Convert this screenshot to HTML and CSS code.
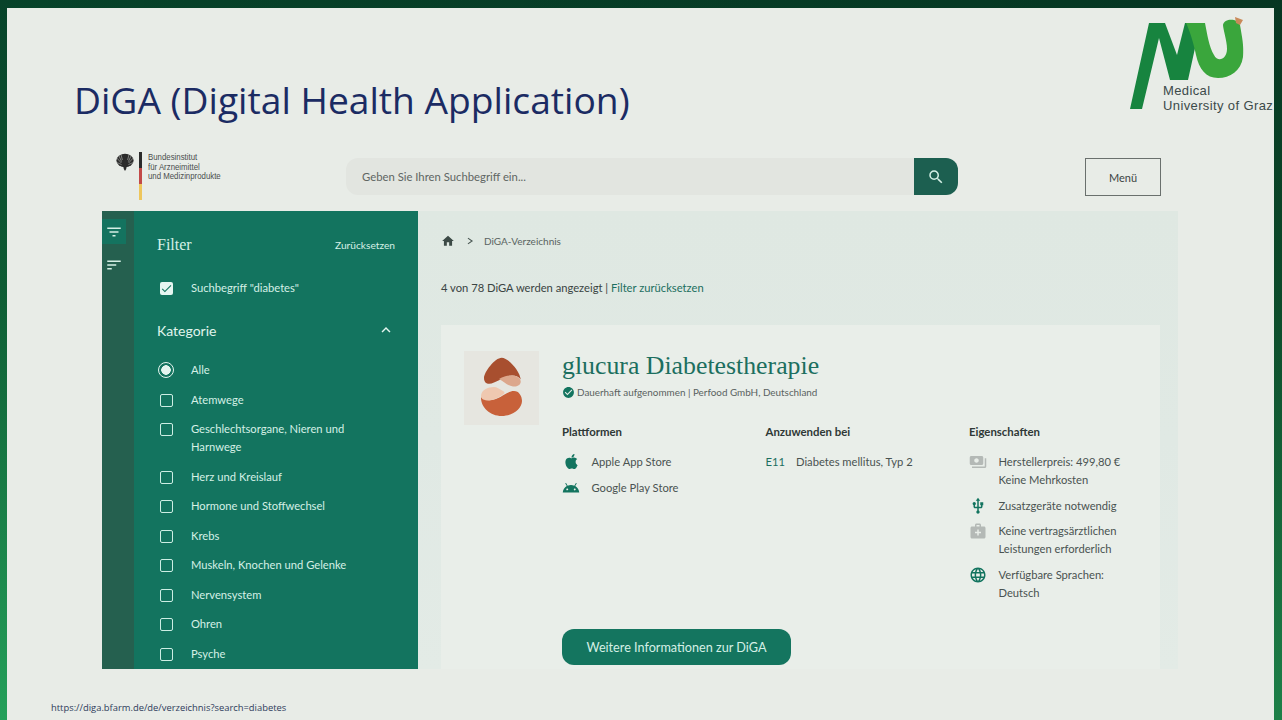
FILE: index.html
```html
<!DOCTYPE html>
<html lang="de">

<head>
  <meta charset="UTF-8" />
  <title>DiGA (Digital Health Application)</title>
  <link rel="stylesheet" href="styles.css">
</head>

<body>
  <div class="slide">

    <!-- Titel und Logo der Folie -->
    <header class="slide-head">
      <h1 class="slide-title">DiGA (Digital Health Application)</h1>
      <div class="mug-logo">
        <svg class="mug-mark" viewBox="0 0 114 93" width="114" height="93">
          <path fill="#17843f" d="M0 92 L19 6 H35 L47 38 L55 6 H63 L67 22 L58 63 H40 L29 21 L12 92 Z" />
          <path fill="#3aa63c" d="M56 6 H75 C77 16 79 30 84 38 C88 46 97 42 97 32 C97 24 93 12 93 8 C94 1 108 1 110 8 C112 20 114 28 113 40 C111 54 100 61 88 61 C76 61 69 52 66 38 C64 28 60 14 56 6 Z" />
          <path fill="#c98a5a" d="M105 0 L113 3 L110 8 L106 6 Z" />
        </svg>
        <div class="mug-text">Medical<br>University of Graz</div>
      </div>
    </header>

    <!-- Kopfzeile der Webseite -->
    <div class="site-bar">
      <div class="bfarm">
        <svg class="eagle" viewBox="0 0 18 18" width="18" height="18">
          <ellipse cx="9" cy="7.5" rx="8.6" ry="6.8" fill="#2c2c2c" />
          <path fill="#2c2c2c" d="M8 3.2 C8 1 10.4 .8 10.6 2.4 L10.3 5 L11 12 L10.2 16 L9 18 L7.8 16 L7 12 L7.7 5 Z" />
          <path stroke="#e8ece7" stroke-width=".45" fill="none" d="M4.8 1 L6.4 7 M2.5 2 L5.6 8.6 M.8 5 L5.4 10 M.8 9.5 L5.6 11.6 M13.2 1 L11.6 7 M15.5 2 L12.4 8.6 M17.2 5 L12.6 10 M17.2 9.5 L12.4 11.6" />
        </svg>
        <div class="flag-bar"></div>
        <div class="bfarm-name">Bundesinstitut<br>für Arzneimittel<br>und Medizinprodukte</div>
      </div>
      <div class="search">
        <div class="search-input">Geben Sie Ihren Suchbegriff ein...</div>
        <div class="search-btn">
          <svg viewBox="0 0 24 24" width="18" height="18"><path fill="#d5f0e6" d="M15.5 14h-.79l-.28-.27A6.471 6.471 0 0 0 16 9.5 6.5 6.5 0 1 0 9.5 16c1.61 0 3.09-.59 4.23-1.57l.27.28v.79l5 4.99L20.49 19l-4.99-5zm-6 0C7.01 14 5 11.99 5 9.5S7.01 5 9.5 5 14 7.01 14 9.5 11.99 14 9.5 14z" /></svg>
        </div>
      </div>
      <div class="menu-btn">Menü</div>
    </div>

    <div class="app">
      <div class="rail">
        <div class="rail-item active">
          <svg viewBox="0 0 24 24" width="18" height="18"><path fill="#d5f0e6" d="M10 18h4v-2h-4v2zM3 6v2h18V6H3zm3 7h12v-2H6v2z" /></svg>
        </div>
        <div class="rail-item">
          <svg viewBox="0 0 24 24" width="18" height="18"><path fill="#d5f0e6" d="M3 18h6v-2H3v2zM3 6v2h18V6H3zm0 7h12v-2H3v2z" /></svg>
        </div>
      </div>

      <aside class="filter">
        <div class="filter-head">
          <span class="filter-title">Filter</span>
          <span class="filter-reset">Zurücksetzen</span>
        </div>
        <div class="opt opt-search"><span class="box checked">
            <svg viewBox="0 0 24 24" width="13" height="13"><path fill="#13745f" d="M9 16.2 4.8 12l-1.4 1.4L9 19 21 7l-1.4-1.4z" /></svg>
          </span><span>Suchbegriff "diabetes"</span></div>

        <div class="cat-head">
          <span>Kategorie</span>
          <svg viewBox="0 0 24 24" width="18" height="18"><path fill="#e4f5ef" d="M7.41 15.41L12 10.83l4.59 4.58L18 14l-6-6-6 6z" /></svg>
        </div>

        <div class="opt-list">
          <div class="opt"><span class="radio"></span><span>Alle</span></div>
          <div class="opt"><span class="box"></span><span>Atemwege</span></div>
          <div class="opt"><span class="box"></span><span>Geschlechtsorgane, Nieren und Harnwege</span></div>
          <div class="opt"><span class="box"></span><span>Herz und Kreislauf</span></div>
          <div class="opt"><span class="box"></span><span>Hormone und Stoffwechsel</span></div>
          <div class="opt"><span class="box"></span><span>Krebs</span></div>
          <div class="opt"><span class="box"></span><span>Muskeln, Knochen und Gelenke</span></div>
          <div class="opt"><span class="box"></span><span>Nervensystem</span></div>
          <div class="opt"><span class="box"></span><span>Ohren</span></div>
          <div class="opt"><span class="box"></span><span>Psyche</span></div>
        </div>
      </aside>

      <main class="content">
        <div class="crumbs">
          <svg viewBox="0 0 24 24" width="14" height="14"><path fill="#3c4a46" d="M10 20v-6h4v6h5v-8h3L12 3 2 12h3v8z" /></svg>
          <svg class="crumb-sep" viewBox="0 0 24 24" width="10" height="10"><path fill="none" stroke="#4a5753" stroke-width="2.6" d="M7 5l10 7-10 7" /></svg>
          <span>DiGA-Verzeichnis</span>
        </div>
        <div class="count">4 von 78 DiGA werden angezeigt | <span class="count-link">Filter zurücksetzen</span></div>

        <section class="card">
          <div class="card-top">
            <div class="app-icon">
              <svg viewBox="0 0 75 72" width="75" height="72">
                <path fill="#a84f2f" d="M37.7 6.7 C31 6.7 20 21 20 27 C20 33 25 34 30 31.5 C36 29 42 24.5 48 24.5 C52 24.5 55 26 56.7 28.5 C56 20 44 6.7 37.7 6.7z" />
                <path fill="#dca78c" d="M35 28 C40 25 44 24 49 24.5 C54 25 57 28 56.7 31 C56.5 34 53 36 49 35.5 C43 34.5 39 30 35 28z" />
                <path fill="#c8613a" d="M17 46 C22 50 27 50 33 47.5 C39 45 44 40 50 40 C55 40 58 45 58 50 C58 58 48 65 37.7 65 C26 65 16.5 56 17 46z" />
                <path fill="#efc8b0" d="M17 45 C17 39 24 36 30 36 C33 36 35 38 39 40 C41 41 41 42 39 43.5 C34 47 29 49.5 25 49.5 C20 49.5 17 48 17 45z" />
              </svg>
            </div>
            <div class="card-titles">
              <h2 class="app-name">glucura Diabetestherapie</h2>
              <div class="app-status">
                <svg viewBox="0 0 24 24" width="13" height="13"><path fill="#13745f" d="M12 2C6.48 2 2 6.48 2 12s4.48 10 10 10 10-4.48 10-10S17.52 2 12 2zm-2 15l-5-5 1.41-1.41L10 14.17l7.59-7.59L19 8l-9 9z" /></svg>
                <span>Dauerhaft aufgenommen | Perfood GmbH, Deutschland</span>
              </div>
            </div>
          </div>

          <div class="card-cols">
            <div class="col">
              <h3 class="col-title">Plattformen</h3>
              <div class="row">
                <svg class="ico ico-apple" viewBox="0 0 24 24" width="15" height="15"><path fill="#13745f" d="M12.152 6.896c-.948 0-2.415-1.078-3.96-1.04-2.04.027-3.91 1.183-4.961 3.014-2.117 3.675-.546 9.103 1.519 12.09 1.013 1.454 2.208 3.09 3.792 3.039 1.52-.065 2.09-.987 3.935-.987 1.831 0 2.35.987 3.96.948 1.637-.026 2.676-1.48 3.676-2.948 1.156-1.688 1.636-3.325 1.662-3.415-.039-.013-3.182-1.221-3.22-4.857-.026-3.04 2.48-4.494 2.597-4.559-1.429-2.09-3.623-2.324-4.39-2.376-2-.156-3.675 1.09-4.61 1.09zM15.53 3.83c.843-1.012 1.4-2.427 1.245-3.83-1.207.052-2.662.805-3.532 1.818-.78.896-1.454 2.338-1.273 3.714 1.338.104 2.715-.688 3.559-1.701" /></svg>
                <span>Apple App Store</span>
              </div>
              <div class="row">
                <svg class="ico" viewBox="0 0 24 24" width="18" height="18"><path fill="#13745f" d="M17.6 9.48l1.84-3.18c.16-.31.04-.69-.26-.85-.29-.15-.65-.06-.83.22l-1.88 3.24c-2.86-1.21-6.08-1.21-8.94 0L5.65 5.67c-.19-.29-.58-.38-.87-.2-.28.18-.37.54-.22.83L6.4 9.48C3.3 11.25 1.28 14.44 1 18h22c-.28-3.56-2.3-6.75-5.4-8.52zM7 15.25c-.69 0-1.25-.56-1.25-1.25s.56-1.25 1.25-1.25 1.25.56 1.25 1.25-.56 1.25-1.25 1.25zm10 0c-.69 0-1.25-.56-1.25-1.25s.56-1.25 1.25-1.25 1.25.56 1.25 1.25-.56 1.25-1.25 1.25z" /></svg>
                <span>Google Play Store</span>
              </div>
            </div>

            <div class="col">
              <h3 class="col-title">Anzuwenden bei</h3>
              <div class="row"><span class="icd">E11</span><span>Diabetes mellitus, Typ 2</span></div>
            </div>

            <div class="col">
              <h3 class="col-title">Eigenschaften</h3>
              <div class="row">
                <svg class="ico" viewBox="0 0 24 24" width="18" height="18"><path fill="#b4b9b6" d="M19 14V6c0-1.1-.9-2-2-2H3c-1.1 0-2 .9-2 2v8c0 1.1.9 2 2 2h14c1.1 0 2-.9 2-2zm-9-1c-1.66 0-3-1.34-3-3s1.34-3 3-3 3 1.34 3 3-1.34 3-3 3zm13-6v11c0 1.1-.9 2-2 2H4v-2h17V7h2z" /></svg>
                <span>Herstellerpreis: 499,80 €<br>Keine Mehrkosten</span>
              </div>
              <div class="row">
                <svg class="ico" viewBox="0 0 24 24" width="18" height="18"><path fill="#13745f" d="M15 7v4h1v2h-3V5h2l-3-4-3 4h2v8H8v-2.07c.7-.37 1.2-1.08 1.2-1.93 0-1.21-.99-2.2-2.2-2.2-1.21 0-2.2.99-2.2 2.2 0 .85.5 1.56 1.2 1.93V13c0 1.11.89 2 2 2h3v3.05c-.71.37-1.2 1.1-1.2 1.95 0 1.22.99 2.2 2.2 2.2 1.21 0 2.2-.98 2.2-2.2 0-.85-.49-1.58-1.2-1.95V15h3c1.11 0 2-.89 2-2v-2h1V7h-4z" /></svg>
                <span>Zusatzgeräte notwendig</span>
              </div>
              <div class="row">
                <svg class="ico" viewBox="0 0 24 24" width="18" height="18"><path fill="#b4b9b6" d="M20 6h-4V4c0-1.1-.9-2-2-2h-4c-1.1 0-2 .9-2 2v2H4c-1.1 0-2 .9-2 2v12c0 1.1.9 2 2 2h16c1.1 0 2-.9 2-2V8c0-1.1-.9-2-2-2zM10 4h4v2h-4V4zm6 11h-3v3h-2v-3H8v-2h3v-3h2v3h3v2z" /></svg>
                <span>Keine vertragsärztlichen<br>Leistungen erforderlich</span>
              </div>
              <div class="row">
                <svg class="ico" viewBox="0 0 24 24" width="18" height="18"><path fill="#13745f" d="M11.99 2C6.47 2 2 6.48 2 12s4.47 10 9.99 10C17.52 22 22 17.52 22 12S17.52 2 11.99 2zm6.93 6h-2.95c-.32-1.25-.78-2.45-1.38-3.56 1.84.63 3.37 1.91 4.33 3.56zM12 4.04c.83 1.2 1.48 2.53 1.91 3.96h-3.82c.43-1.43 1.08-2.76 1.91-3.96zM4.26 14C4.1 13.36 4 12.69 4 12s.1-1.36.26-2h3.38c-.08.66-.14 1.32-.14 2 0 .68.06 1.34.14 2H4.26zm.82 2h2.95c.32 1.25.78 2.45 1.38 3.56-1.84-.63-3.37-1.9-4.33-3.56zm2.95-8H5.08c.96-1.66 2.49-2.93 4.33-3.56C8.81 5.55 8.35 6.75 8.03 8zM12 19.96c-.83-1.2-1.48-2.53-1.91-3.96h3.82c-.43 1.43-1.08 2.76-1.91 3.96zM14.34 14H9.66c-.09-.66-.16-1.32-.16-2 0-.68.07-1.35.16-2h4.68c.09.65.16 1.32.16 2 0 .68-.07 1.34-.16 2zm.25 5.56c.6-1.11 1.06-2.31 1.38-3.56h2.95c-.96 1.65-2.49 2.93-4.33 3.56zM16.36 14c.08-.66.14-1.32.14-2 0-.68-.06-1.34-.14-2h3.38c.16.64.26 1.31.26 2s-.1 1.36-.26 2h-3.38z" /></svg>
                <span>Verfügbare Sprachen:<br>Deutsch</span>
              </div>
            </div>
          </div>

          <div class="more-btn">Weitere Informationen zur DiGA</div>
        </section>
      </main>
    </div>

    <div class="source-url">https://diga.bfarm.de/de/verzeichnis?search=diabetes</div>
  </div>
</body>

</html>
```

FILE: styles.css
```css
* {
  box-sizing: border-box;
}

html,
body {
  height: 100%;
}

body {
  margin: 0;
  overflow: hidden;
  font-family: Lato, sans-serif;
  background:
    linear-gradient(to right, rgba(0, 0, 0, 0), rgba(0, 0, 0, 0.2)),
    linear-gradient(to bottom, #07432a 0%, #0e5c34 40%, #24a05a 100%);
}

.slide {
  margin: 8px 8px 0 7px;
  height: 712px;
  overflow: hidden;
  background: #e8ece7;
}

/* Folienkopf */
.slide-head {
  height: 142px;
  display: flex;
  justify-content: space-between;
  align-items: flex-start;
  padding-left: 67px;
}

.slide-title {
  margin: 69px 0 0;
  font-family: "Open Sans", sans-serif;
  font-size: 37.2px;
  font-weight: 400;
  line-height: 46px;
  color: #1b2b63;
}

.mug-logo {
  width: 144px;
  margin-top: 9px;
  display: grid;
  flex: none;
}

.mug-mark,
.mug-text {
  grid-area: 1 / 1;
}

.mug-text {
  margin: 66px 0 0 33px;
  font-family: "Liberation Sans", sans-serif;
  font-size: 13px;
  line-height: 15px;
  letter-spacing: 0.38px;
  white-space: nowrap;
  color: #3c4a4a;
}

/* Kopfzeile der Webseite */
.site-bar {
  height: 61px;
  display: flex;
  align-items: flex-start;
  padding-left: 109px;
}

.bfarm {
  width: 230px;
  display: flex;
  align-items: flex-start;
  flex: none;
}

.eagle {
  margin-top: 3px;
}

.flag-bar {
  width: 3px;
  height: 48px;
  margin: 2px 6px 0 5px;
  background: linear-gradient(to bottom, #2b2b2b 0 33%, #c24a48 33% 66%, #eec65c 66% 100%);
}

.bfarm-name {
  margin-top: 3px;
  font-family: "Liberation Sans", sans-serif;
  font-size: 9px;
  line-height: 9.5px;
  white-space: nowrap;
  color: #4a4f4e;
  transform: scaleX(0.87);
  transform-origin: left top;
}

.search {
  width: 612px;
  height: 37px;
  margin-top: 8px;
  display: flex;
  flex: none;
}

.search-input {
  flex: 1;
  padding-left: 16px;
  display: flex;
  align-items: center;
  border-radius: 12px 0 0 12px;
  font-size: 11.3px;
  color: #5f6663;
  background: #e2e5e0;
}

.search-btn {
  width: 44px;
  display: flex;
  align-items: center;
  justify-content: center;
  border-radius: 0 12px 12px 0;
  background: #1c5f50;
}

.menu-btn {
  width: 76px;
  height: 38px;
  margin: 8px 0 0 127px;
  display: flex;
  align-items: center;
  justify-content: center;
  border: 1px solid #6a706d;
  font-size: 11px;
  color: #3c4443;
}

/* Anwendung */
.app {
  width: 1076px;
  height: 458px;
  margin-left: 95px;
  display: flex;
  overflow: hidden;
}

.rail {
  width: 32px;
  padding-top: 8px;
  flex: none;
  background: #25604f;
}

.rail-item {
  width: 24px;
  height: 25px;
  margin-bottom: 8px;
  display: flex;
  align-items: center;
  justify-content: center;
}

.rail-item.active {
  background: #14735f;
}

.filter {
  width: 284px;
  padding: 0 23px;
  flex: none;
  font-size: 11.2px;
  color: #d5f0e6;
  background: #13745f;
}

.filter-head {
  height: 68px;
  display: flex;
  align-items: center;
  justify-content: space-between;
}

.filter-title {
  font-family: "Liberation Serif", serif;
  font-size: 16px;
}

.filter-reset {
  font-size: 10.2px;
}

.opt {
  display: flex;
  align-items: flex-start;
  gap: 18px;
  line-height: 18px;
}

.opt-search {
  height: 18px;
}

.cat-head {
  height: 36px;
  margin-top: 15px;
  display: flex;
  align-items: center;
  justify-content: space-between;
  font-size: 14px;
  color: #e0f4ed;
}

.opt-list {
  margin-top: 13px;
  display: flex;
  flex-direction: column;
  gap: 11.5px;
}

.box {
  width: 13px;
  height: 13px;
  margin: 3px 0 0 3px;
  display: flex;
  align-items: center;
  justify-content: center;
  flex: none;
  border: 1.5px solid #cdeee4;
  border-radius: 2px;
}

.box.checked {
  border: 0;
  background: #e6f6f1;
}

.radio {
  width: 16px;
  height: 16px;
  margin: 1px -1px 0 1px;
  flex: none;
  border: 1.5px solid #e4f5ef;
  border-radius: 50%;
  background: radial-gradient(circle, #e4f5ef 0 4.5px, transparent 5px);
}

.content {
  flex: 1;
  padding: 0 18px 0 23px;
  background: linear-gradient(to bottom, #dfe8e2, #e0e9e4 50%, #e3ebe6);
  font-size: 11.2px;
  color: #3a4442;
}

.crumbs {
  height: 60px;
  padding-bottom: 1px;
  display: flex;
  align-items: center;
  font-size: 10px;
  color: #5a6461;
}

.crumb-sep {
  margin: 0 9px 0 10px;
}

.count {
  height: 54px;
  padding-top: 8px;
  line-height: 18px;
  color: #3a4442;
}

.count-link {
  color: #1c6f5f;
}

.card {
  height: 344px;
  padding: 26px 23px 0;
  background: #e9eee9;
}

.card-top {
  height: 72px;
  display: flex;
  align-items: flex-start;
  gap: 23px;
}

.app-icon {
  width: 75px;
  height: 74px;
  flex: none;
  background: #e6e6e0;
}

.app-name {
  margin: 0;
  font-family: "Liberation Serif", serif;
  font-size: 25.8px;
  font-weight: 400;
  line-height: 30px;
  color: #1c6f5f;
}

.app-status {
  margin-top: 4px;
  display: flex;
  align-items: center;
  gap: 2px;
  font-size: 9.9px;
  line-height: 14px;
  color: #59625f;
}

.card-cols {
  height: 206px;
  margin-left: 98px;
  display: grid;
  grid-template-columns: 203.5px 203.5px 1fr;
}

.col-title {
  margin: 0 0 12px;
  font-size: 11.4px;
  font-weight: 700;
  line-height: 18px;
  color: #2f3836;
}

.row {
  margin-bottom: 7.5px;
  display: flex;
  align-items: flex-start;
  line-height: 18px;
  color: #4a5351;
}

.ico {
  margin-right: 11.5px;
  flex: none;
}

.ico-apple {
  margin: 1px 12.5px 0 2px;
}

.icd {
  width: 30.5px;
  flex: none;
  color: #1c6f5f;
}

.more-btn {
  width: 229px;
  height: 36px;
  margin-left: 98px;
  display: flex;
  align-items: center;
  justify-content: center;
  border-radius: 12px;
  font-size: 12.65px;
  color: #d5f0e6;
  background: #14755f;
}

.source-url {
  margin: 31px 0 0 44px;
  font-family: "Open Sans", sans-serif;
  font-size: 9.4px;
  line-height: 16px;
  color: #2f3c5c;
}
```
